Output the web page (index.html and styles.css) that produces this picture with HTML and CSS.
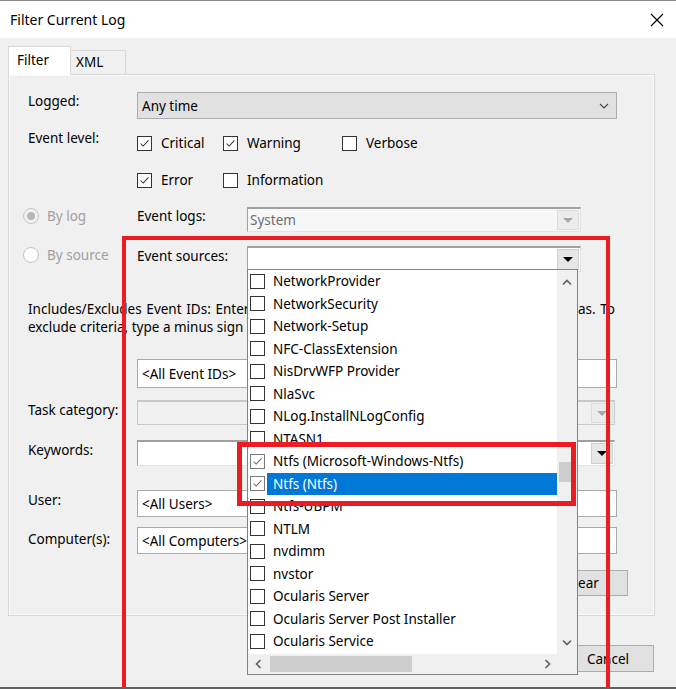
FILE: index.html
```html
<!DOCTYPE html>
<html>
<head>
<meta charset="utf-8">
<link rel="stylesheet" href="styles.css">
</head>
<body>
<div class="window">
  <div class="titlebar">
    <span class="title">Filter Current Log</span>
    <svg class="close" width="14" height="14" viewBox="0 0 14 14"><path d="M1 1 L13 13 M13 1 L1 13" stroke="#000" stroke-width="1.1" fill="none"/></svg>
  </div>
  <div class="content">
    <div class="tabs">
      <div class="tab tab-active">Filter</div>
      <div class="tab tab-xml">XML</div>
    </div>
    <div class="panel">
      <div class="field f-logged">
        <div class="lbl">Logged:</div>
        <div class="select">
          <span>Any time</span>
          <svg width="10" height="6" viewBox="0 0 10 6"><polyline points="1,1 5,5 9,1" stroke="#444" stroke-width="1.1" fill="none"/></svg>
        </div>
      </div>
      <div class="field f-level">
        <div class="lbl lbl-up">Event level:</div>
        <div class="checks">
          <div class="chk"><span class="box"><svg viewBox="0 0 15 15"><polyline points="3,7.5 6,10.5 12,4" stroke="#333" stroke-width="1.2" fill="none"/></svg></span><span>Critical</span></div>
          <div class="chk"><span class="box"><svg viewBox="0 0 15 15"><polyline points="3,7.5 6,10.5 12,4" stroke="#333" stroke-width="1.2" fill="none"/></svg></span><span>Warning</span></div>
          <div class="chk"><span class="box"></span><span>Verbose</span></div>
          <div class="chk"><span class="box"><svg viewBox="0 0 15 15"><polyline points="3,7.5 6,10.5 12,4" stroke="#333" stroke-width="1.2" fill="none"/></svg></span><span>Error</span></div>
          <div class="chk"><span class="box"></span><span>Information</span></div>
        </div>
      </div>
      <div class="field f-log">
        <div class="radio-opt"><span class="radio checked"><span class="dot"></span></span><span>By log</span></div>
        <div class="lbl2">Event logs:</div>
        <div class="combo disabled">
          <span class="combo-text">System</span>
          <span class="combo-btn"><span class="tri"></span></span>
        </div>
      </div>
      <div class="field f-source">
        <div class="radio-opt"><span class="radio"></span><span>By source</span></div>
        <div class="lbl2">Event sources:</div>
        <div class="combo">
          <span class="combo-text"></span>
          <span class="combo-btn"><span class="tri"></span></span>
        </div>
      </div>
      <div class="hint">
        <div class="hint-l1">Includes/Excludes Event IDs: Enter ID numbers and/or ID ranges separated by commas. To</div>
        <div class="hint-l2">exclude criteria, type a minus sign first. For example 1,3,5-99,-76</div>
      </div>
      <div class="field f-ids">
        <div class="lbl"></div>
        <div class="textbox">&lt;All Event IDs&gt;</div>
      </div>
      <div class="field f-task">
        <div class="lbl">Task category:</div>
        <div class="combo2 disabled">
          <span class="combo-text"></span>
          <span class="combo-btn"><span class="tri"></span></span>
        </div>
      </div>
      <div class="field f-keys">
        <div class="lbl">Keywords:</div>
        <div class="combo2">
          <span class="combo-text"></span>
          <span class="combo-btn"><span class="tri"></span></span>
        </div>
      </div>
      <div class="field f-user">
        <div class="lbl">User:</div>
        <div class="textbox">&lt;All Users&gt;</div>
      </div>
      <div class="field f-comp">
        <div class="lbl lbl-comp">Computer(s):</div>
        <div class="textbox">&lt;All Computers&gt;</div>
      </div>
      <div class="f-clear">
        <div class="btn">Clear</div>
      </div>
    </div>
    <div class="dlg-buttons">
      <div class="btn">OK</div>
      <div class="btn">Cancel</div>
    </div>
  </div>

  <div class="dropdown">
    <div class="items">
      <div class="item"><span class="ibox"></span><span class="itext">NetworkProvider</span></div>
      <div class="item"><span class="ibox"></span><span class="itext">NetworkSecurity</span></div>
      <div class="item"><span class="ibox"></span><span class="itext">Network-Setup</span></div>
      <div class="item"><span class="ibox"></span><span class="itext">NFC-ClassExtension</span></div>
      <div class="item"><span class="ibox"></span><span class="itext">NisDrvWFP Provider</span></div>
      <div class="item"><span class="ibox"></span><span class="itext">NlaSvc</span></div>
      <div class="item"><span class="ibox"></span><span class="itext">NLog.InstallNLogConfig</span></div>
      <div class="item"><span class="ibox"></span><span class="itext">NTASN1</span></div>
      <div class="item"><span class="ibox ichecked"><svg viewBox="0 0 15 15"><polyline points="3,7.5 6,10.5 12,4" stroke="#6a6a6a" stroke-width="1.2" fill="none"/></svg></span><span class="itext">Ntfs (Microsoft-Windows-Ntfs)</span></div>
      <div class="item"><span class="ibox ichecked"><svg viewBox="0 0 15 15"><polyline points="3,7.5 6,10.5 12,4" stroke="#6a6a6a" stroke-width="1.2" fill="none"/></svg></span><span class="itext selected">Ntfs (Ntfs)</span></div>
      <div class="item"><span class="ibox"></span><span class="itext">Ntfs-UBPM</span></div>
      <div class="item"><span class="ibox"></span><span class="itext">NTLM</span></div>
      <div class="item"><span class="ibox"></span><span class="itext">nvdimm</span></div>
      <div class="item"><span class="ibox"></span><span class="itext">nvstor</span></div>
      <div class="item"><span class="ibox"></span><span class="itext">Ocularis Server</span></div>
      <div class="item"><span class="ibox"></span><span class="itext">Ocularis Server Post Installer</span></div>
      <div class="item"><span class="ibox"></span><span class="itext">Ocularis Service</span></div>
    </div>
    <div class="vscroll">
      <div class="sarrow"><svg width="10" height="7" viewBox="0 0 10 7"><polyline points="1,5.5 5,1.5 9,5.5" stroke="#606060" stroke-width="1.6" fill="none"/></svg></div>
      <div class="vtrack"><div class="vthumb"></div></div>
      <div class="sarrow"><svg width="10" height="7" viewBox="0 0 10 7"><polyline points="1,1.5 5,5.5 9,1.5" stroke="#606060" stroke-width="1.6" fill="none"/></svg></div>
    </div>
    <div class="hscroll">
      <div class="harrow"><svg width="7" height="10" viewBox="0 0 7 10"><polyline points="5.5,1 1.5,5 5.5,9" stroke="#606060" stroke-width="1.6" fill="none"/></svg></div>
      <div class="htrack"><div class="hthumb"></div></div>
      <div class="harrow"><svg width="7" height="10" viewBox="0 0 7 10"><polyline points="1.5,1 5.5,5 1.5,9" stroke="#606060" stroke-width="1.6" fill="none"/></svg></div>
    </div>
    <div class="corner"></div>
  </div>

  <div class="mark mark-big"></div>
  <div class="mark mark-small"></div>
</div>
</body>
</html>
```

FILE: styles.css
```css
* { box-sizing: border-box; }
html, body { margin: 0; padding: 0; }
body {
  width: 676px;
  height: 689px;
  overflow: hidden;
  background: #f0f0f0;
  font-family: "Noto Sans", "Open Sans", sans-serif;
  font-size: 13.5px;
  color: #000;
}
.window {
  position: relative;
  width: 676px;
  height: 689px;
  overflow: hidden;
  border-bottom: 2px solid #5f5f5f;
}
.titlebar {
  height: 38px;
  background: #fff;
  border-top: 1px solid #8c8c8c;
  display: flex;
  align-items: center;
  justify-content: space-between;
  padding: 0 12px 0 10px;
}
.title { font-size: 14px; line-height: 18px; }
.close { display: block; }

.content { padding: 8px 21px 0 8px; }
.tabs { display: flex; align-items: flex-end; height: 28px; }
.tab { line-height: 18px; }
.tab-active {
  width: 63px;
  height: 29px;
  margin-bottom: -1px;
  background: #fff;
  border: 1px solid #d9d9d9;
  border-bottom: none;
  padding: 4px 0 0 8px;
  position: relative;
  z-index: 1;
}
.tab-xml {
  width: 55px;
  height: 24px;
  border: 1px solid #d9d9d9;
  border-left: none;
  border-bottom: none;
  padding: 2px 0 0 5px;
}
.panel {
  height: 542px;
  border: 1px solid #d9d9d9;
  box-shadow: inset 0 0 0 1px #fbfbfb;
  padding: 17px 0 0 19px;
}
.field { display: flex; align-items: flex-start; }
.lbl { width: 109px; line-height: 18px; padding-top: 1px; flex: none; }
.lbl-up { margin-top: -2px; padding-top: 0; }
.lbl-comp { padding-top: 3px; }

.f-logged { height: 27px; }
.f-logged .lbl { padding-top: 0; }
.select {
  width: 480px;
  height: 27px;
  background: #e1e1e1;
  border: 1px solid #adadad;
  display: flex;
  align-items: center;
  justify-content: space-between;
  padding: 0 7px 0 4px;
  line-height: 18px;
}
.select svg { display: block; }

.f-level { margin-top: 12px; }
.checks {
  display: grid;
  grid-template-columns: 86px 119px auto;
  grid-auto-rows: 24px;
  row-gap: 13px;
}
.chk { display: flex; align-items: center; gap: 9px; line-height: 18px; }
.box {
  width: 15px;
  height: 15px;
  border: 1px solid #333;
  background: #fff;
  flex: none;
  display: block;
}
.box svg { display: block; width: 13px; height: 13px; }

.f-log { margin-top: 15px; margin-left: -5px; height: 25px; }
.f-source { margin-top: 14px; margin-left: -5px; height: 26px; }
.radio-opt {
  width: 114px;
  display: flex;
  align-items: center;
  gap: 8px;
  color: #a0a0a0;
  line-height: 18px;
  padding-top: 0;
}
.radio {
  width: 16px;
  height: 16px;
  border-radius: 50%;
  border: 1px solid #c4c4c4;
  background: #fdfdfd;
  display: flex;
  align-items: center;
  justify-content: center;
}
.radio.checked { background: #f0f0f0; }
.dot { width: 8px; height: 8px; border-radius: 50%; background: #b8b8b8; }
.lbl2 { width: 110px; line-height: 18px; padding-top: 1px; }
.f-log .lbl2 { padding-top: 0; }
.combo {
  width: 334px;
  height: 100%;
  background: #fff;
  border-top: 2px solid #a0a0a0;
  border-left: 1px solid #a0a0a0;
  border-right: 1px solid #e3e3e3;
  border-bottom: 1px solid #e3e3e3;
  display: flex;
  align-items: stretch;
}
.combo.disabled { background: #f7f7f7; color: #6d6d6d; }
.combo-text { flex: 1; line-height: 20px; padding: 1px 0 0 2px; }
.combo-btn {
  width: 22px;
  margin: 1px 1px 1px 0;
  background: #e6e6e6;
  border: 1px solid #cfcfcf;
  display: flex;
  align-items: center;
  justify-content: center;
}
.tri {
  width: 0;
  height: 0;
  border-left: 5px solid transparent;
  border-right: 5px solid transparent;
  border-top: 5px solid #000;
}
.disabled .tri { border-top-color: #a8a8a8; }
.disabled .combo-btn { background: #ececec; border-color: #dcdcdc; }

.hint { margin-top: 28px; line-height: 18px; white-space: nowrap; }
.hint-l1 { width: 587px; text-align: justify; text-align-last: justify; white-space: normal; }

.f-ids { margin-top: 23px; height: 29px; }
.textbox {
  width: 480px;
  height: 100%;
  background: #fff;
  border: 1px solid #a9a9a9;
  display: flex;
  align-items: center;
  padding-left: 4px;
  line-height: 18px;
}
.f-task { margin-top: 12px; height: 25px; }
.f-keys { margin-top: 15px; height: 26px; }
.combo2 {
  width: 478px;
  height: 100%;
  background: #fff;
  border-top: 2px solid #a0a0a0;
  border-left: 1px solid #a0a0a0;
  border-right: 1px solid #e3e3e3;
  border-bottom: 1px solid #e3e3e3;
  display: flex;
}
.combo2.disabled { background: #f0f0f0; border-color: #c8c8c8; }
.f-user { margin-top: 24px; height: 27px; }
.f-comp { margin-top: 10px; height: 27px; }
.f-clear { margin-top: 16px; display: flex; justify-content: flex-end; padding-right: 26px; }
.btn {
  width: 91px;
  height: 26px;
  background: #e1e1e1;
  border: 1px solid #adadad;
  display: flex;
  align-items: center;
  justify-content: center;
  line-height: 18px;
}
.dlg-buttons { margin-top: 29px; display: flex; justify-content: flex-end; gap: 8px; padding-right: 1px; }
.dlg-buttons .btn { width: 92px; height: 27px; }

/* dropdown popup */
.dropdown {
  position: absolute;
  left: 247px;
  top: 269px;
  width: 331px;
  height: 406px;
  background: #fff;
  border: 1px solid #828282;
  display: grid;
  grid-template-columns: 1fr 20px;
  grid-template-rows: 1fr 20px;
  z-index: 5;
}
.items { overflow: hidden; }
.item {
  height: 22.5px;
  display: flex;
  align-items: center;
  padding-left: 2px;
  white-space: nowrap;
}
.ibox {
  width: 15px;
  height: 15px;
  border: 1px solid #333;
  background: #fff;
  flex: none;
}
.ibox.ichecked { border-color: #7a7a7a; }
.ibox svg { display: block; width: 13px; height: 13px; }
.itext {
  margin-left: 2px;
  padding-left: 6px;
  line-height: 22px;
  flex: 1;
}
.itext.selected { background: #0078d7; color: #fff; }
.vscroll { background: #f0f0f0; display: flex; flex-direction: column; }
.sarrow { height: 24px; display: flex; align-items: center; justify-content: center; flex: none; }
.sarrow svg { display: block; }
.vtrack { flex: 1; }
.vthumb { margin: 168px 3px 0 2px; height: 20px; background: #cdcdcd; }
.hscroll { background: #f0f0f0; display: flex; align-items: stretch; }
.harrow { width: 20px; display: flex; align-items: center; justify-content: center; flex: none; }
.htrack { flex: 1; display: flex; align-items: center; }
.hthumb { margin-left: 2px; width: 142px; height: 16px; background: #cdcdcd; }
.corner { background: #f0f0f0; }

/* annotation rectangles */
.mark { position: absolute; border-style: solid; border-color: #ec1c24; z-index: 10; }
.mark-big { left: 122px; top: 236px; width: 488px; height: 520px; border-width: 4px 4px 0 4px; }
.mark-small { left: 237px; top: 442px; width: 339px; height: 64px; border-width: 5px; }
```
